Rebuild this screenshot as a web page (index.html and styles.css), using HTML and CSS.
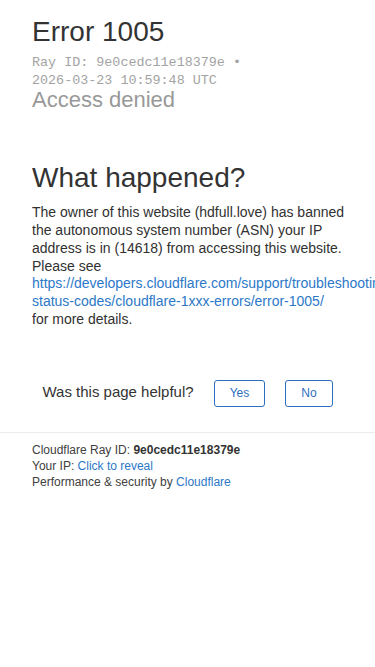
FILE: index.html
```html
<!DOCTYPE html>
<html lang="en">
<head>
<meta charset="utf-8">
<meta name="viewport" content="width=device-width, initial-scale=1">
<title>Access denied | hdfull.love used Cloudflare to restrict access</title>
<link rel="stylesheet" href="styles.css">
</head>
<body>
<main class="main">
  <header class="error-header">
    <h1 class="error-title">Error 1005</h1>
    <div class="ray-meta"><span class="ray-item">Ray ID: 9e0cedc11e18379e</span> <span class="ray-sep">&bull;</span> <span class="ray-item ray-date">2026-03-23 10:59:48 UTC</span></div>
    <h2 class="error-subtitle">Access denied</h2>
  </header>
  <section class="details">
    <h2 class="details-title">What happened?</h2>
    <p class="details-text">The owner of this website (hdfull.love) has banned the autonomous system number (ASN) your IP address is in (14618) from accessing this website. Please see <a class="link details-link" href="#">https://developers.cloudflare.com/support/troubleshooting/http-status-codes/cloudflare-1xxx-errors/error-1005/</a> for more details.</p>
  </section>
  <div class="feedback">
    <span class="feedback-label">Was this page helpful?</span>
    <button class="feedback-btn" type="button">Yes</button>
    <button class="feedback-btn" type="button">No</button>
  </div>
</main>
<footer class="footer">
  <p class="footer-line">Cloudflare Ray ID: <strong class="footer-strong">9e0cedc11e18379e</strong></p>
  <p class="footer-line">Your IP: <a class="link" href="#">Click to reveal</a></p>
  <p class="footer-line">Performance &amp; security by <a class="link" href="#">Cloudflare</a></p>
</footer>
</body>
</html>
```
FILE: styles.css
```css
html, body {
  margin: 0;
  padding: 0;
  background: #ffffff;
}
body {
  font-family: "Liberation Sans", Arial, Helvetica, sans-serif;
  color: #404040;
}
.main {
  padding: 16px 24px 0 32px;
}
.error-header {
  display: flex;
  flex-direction: column;
}
.error-title {
  margin: 0;
  font-size: 28px;
  line-height: 32px;
  font-weight: 400;
  color: #333333;
}
.ray-meta {
  margin-top: 6px;
  font-family: "Liberation Mono", "Courier New", monospace;
  font-size: 13.4px;
  line-height: 17.6px;
  color: #a3a3a3;
}
.ray-date {
  display: inline-block;
}
.error-subtitle {
  margin: 0;
  font-size: 22px;
  line-height: 22px;
  font-weight: 400;
  color: #999999;
}
.details {
  margin-top: 51px;
}
.details-title {
  margin: 0;
  font-size: 28px;
  line-height: 32px;
  font-weight: 400;
  color: #333333;
}
.details-text {
  margin: 10px 0 0 0;
  font-size: 14px;
  line-height: 17.8px;
  color: #313131;
}
.link {
  color: #2c78c8;
  text-decoration: none;
}
.details-link {
  display: block;
}
.feedback {
  margin-top: 51px;
  display: flex;
  align-items: center;
  justify-content: center;
  gap: 20px;
  margin-left: -32px;
  margin-right: -24px;
}
.feedback-label {
  font-size: 15px;
  line-height: 18px;
  color: #333333;
  padding-bottom: 2px;
}
.feedback-btn {
  font-family: "Liberation Sans", Arial, Helvetica, sans-serif;
  font-size: 12px;
  height: 27px;
  padding: 0 15px;
  border: 1px solid #2c6fc0;
  border-radius: 3px;
  background: #ffffff;
  color: #2c6fc0;
}
.footer {
  margin-top: 25px;
  border-top: 1px solid #ececec;
  padding: 9px 32px 0 32px;
}
.footer-line {
  margin: 0;
  font-size: 12px;
  line-height: 16px;
  color: #404040;
}
.footer-strong {
  font-weight: 700;
  color: #333333;
}
```
